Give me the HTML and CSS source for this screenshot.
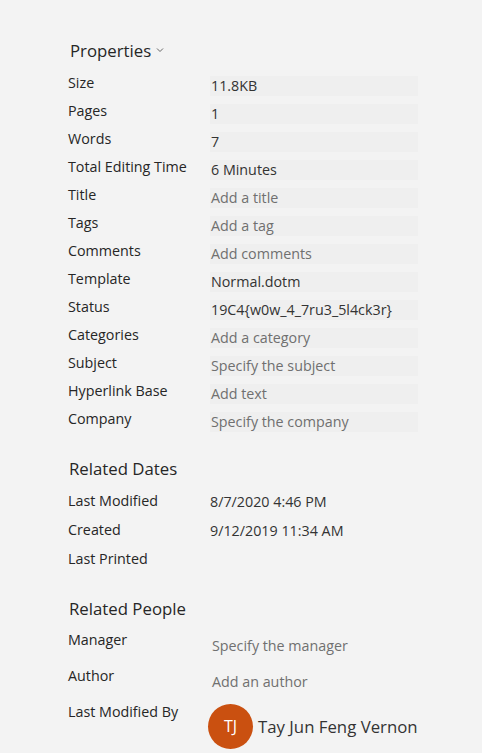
FILE: index.html
```html
<!DOCTYPE html>
<html>
<head>
<meta charset="utf-8">
<link rel="stylesheet" href="styles.css">
</head>
<body>
<div class="page">
  <div class="section-head props-head">Properties
    <svg class="chev" width="8" height="6" viewBox="0 0 8 6"><path d="M1 1.5 L4 4.5 L7 1.5" fill="none" stroke="#666" stroke-width="1"/></svg>
  </div>
  <div class="props">
    <div class="row"><div class="label">Size</div><div class="value">11.8KB</div></div>
    <div class="row"><div class="label">Pages</div><div class="value">1</div></div>
    <div class="row"><div class="label">Words</div><div class="value">7</div></div>
    <div class="row"><div class="label">Total Editing Time</div><div class="value">6 Minutes</div></div>
    <div class="row"><div class="label">Title</div><div class="value ph">Add a title</div></div>
    <div class="row"><div class="label">Tags</div><div class="value ph">Add a tag</div></div>
    <div class="row"><div class="label">Comments</div><div class="value ph">Add comments</div></div>
    <div class="row"><div class="label">Template</div><div class="value">Normal.dotm</div></div>
    <div class="row"><div class="label">Status</div><div class="value">19C4{w0w_4_7ru3_5l4ck3r}</div></div>
    <div class="row"><div class="label">Categories</div><div class="value ph">Add a category</div></div>
    <div class="row"><div class="label">Subject</div><div class="value ph">Specify the subject</div></div>
    <div class="row"><div class="label">Hyperlink Base</div><div class="value ph">Add text</div></div>
    <div class="row"><div class="label">Company</div><div class="value ph">Specify the company</div></div>
  </div>

  <div class="section-head dates-head">Related Dates</div>
  <div class="dates">
    <div class="drow"><div class="label">Last Modified</div><div class="dval">8/7/2020 4:46 PM</div></div>
    <div class="drow"><div class="label">Created</div><div class="dval">9/12/2019 11:34 AM</div></div>
    <div class="drow"><div class="label">Last Printed</div><div class="dval"></div></div>
  </div>

  <div class="section-head people-head">Related People</div>
  <div class="people">
    <div class="prow"><div class="label">Manager</div><div class="pval ph">Specify the manager</div></div>
    <div class="prow"><div class="label">Author</div><div class="pval ph">Add an author</div></div>
    <div class="prow last"><div class="label">Last Modified By</div>
      <div class="person"><div class="avatar">TJ</div><div class="pname">Tay Jun Feng Vernon</div></div>
    </div>
  </div>
</div>
</body>
</html>
```

FILE: styles.css
```css
html, body {
  margin: 0;
  padding: 0;
  background: #f3f3f3;
}
body {
  font-family: "Segoe UI", "Open Sans", "Noto Sans", sans-serif;
  color: #262626;
  font-size: 14.3px;
}
.page {
  padding: 39px 0 0 68px;
  width: 400px;
}
.section-head {
  font-size: 16.8px;
  line-height: 24px;
  height: 24px;
  color: #262626;
  padding-left: 1px;
  display: flex;
  align-items: center;
}
.props-head {
  padding-left: 2px;
}
.chev {
  margin-left: 5px;
  margin-top: -3px;
}
.props {
  margin-top: 10px;
  display: flex;
  flex-direction: column;
}
.row {
  display: flex;
  height: 28px;
}
.label {
  flex: none;
  width: 142px;
  line-height: 20px;
  height: 20px;
  white-space: nowrap;
}
.value {
  flex: none;
  margin-top: 3px;
  height: 20px;
  line-height: 20px;
  width: 207px;
  padding-left: 1px;
  background: #efefef;
  color: #333;
  white-space: nowrap;
}
.ph {
  color: #707070;
}
.dates-head {
  margin-top: 20px;
}
.dates {
  margin-top: 10px;
}
.drow {
  display: flex;
  height: 29px;
}
.dval {
  line-height: 20px;
  padding-top: 1px;
  color: #333;
}
.people-head {
  margin-top: 19px;
}
.people {
  margin-top: 9px;
}
.prow {
  display: flex;
  height: 36px;
}
.pval {
  line-height: 20px;
  padding-top: 6px;
  padding-left: 2px;
}
.prow.last {
  height: 50px;
}
.person {
  display: flex;
  align-items: center;
  gap: 5px;
  margin-top: 2px;
  margin-left: -2px;
  height: 44px;
}
.avatar {
  flex: none;
  width: 45px;
  height: 45px;
  border-radius: 50%;
  background: #ca5010;
  color: #fff;
  font-size: 16px;
  display: flex;
  align-items: center;
  justify-content: center;
}
.pname {
  font-size: 16.8px;
  color: #333;
  white-space: nowrap;
}
```
